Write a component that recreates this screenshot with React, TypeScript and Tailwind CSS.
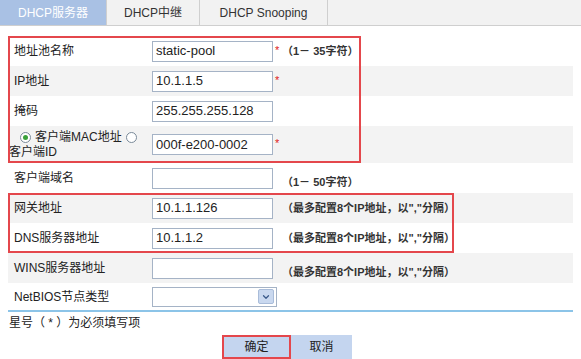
import { ChevronDown } from "lucide-react";

const font = { fontFamily: '"Liberation Sans", "Noto Sans CJK SC", sans-serif' };

type Row = {
  label: React.ReactNode;
  value?: string;
  required?: boolean;
  hint?: string;
  gray?: boolean;
  h: string;
  select?: boolean;
};

const rows: Row[] = [
  { label: "地址池名称", value: "static-pool", required: true, hint: "（1－ 35字符）", h: "h-[30px]" },
  { label: "IP地址", value: "10.1.1.5", required: true, gray: true, h: "h-[30px]" },
  { label: "掩码", value: "255.255.255.128", h: "h-[30px]" },
  {
    label: (
      <div className="leading-[15px] -ml-[5px]">
        <div className="flex items-center gap-[4px] pl-[11px]">
          <span className="w-[11px] h-[11px] rounded-full border border-[#7a8a99] bg-white flex items-center justify-center">
            <span className="w-[5px] h-[5px] rounded-full bg-[#3aa13a]" />
          </span>
          <span>客户端MAC地址</span>
          <span className="w-[11px] h-[11px] rounded-full border border-[#7a8a99] bg-white" />
        </div>
        <div>客户端ID</div>
      </div>
    ),
    value: "000f-e200-0002",
    required: true,
    gray: true,
    h: "h-[37px]",
  },
  { label: "客户端域名", value: "", hint: "（1－ 50字符）", h: "h-[30px]" },
  { label: "网关地址", value: "10.1.1.126", hint: "（最多配置8个IP地址，以\",\"分隔）", gray: true, h: "h-[30px]" },
  { label: "DNS服务器地址", value: "10.1.1.2", hint: "（最多配置8个IP地址，以\",\"分隔）", h: "h-[30px]" },
  { label: "WINS服务器地址", value: "", hint: "（最多配置8个IP地址，以\",\"分隔）", gray: true, h: "h-[30px]" },
  { label: "NetBIOS节点类型", select: true, h: "h-[27px]" },
];

export default function App() {
  return (
    <div className="w-[581px] h-[359px] bg-white text-[12px] text-[#222] overflow-hidden" style={font}>
      {/* Tabs */}
      <div className="flex h-[26px] border-b border-[#cfcfcf] bg-[#f2f2f2]">
        <div className="w-[106px] flex items-center justify-center bg-[#a9c1e4] text-white text-[12px]">DHCP服务器</div>
        <div className="w-[94px] flex items-center justify-center border-x border-[#cfcfcf] text-[#333]">DHCP中继</div>
        <div className="w-[128px] flex items-center justify-center border-r border-[#cfcfcf] text-[#333]">DHCP Snooping</div>
        <div className="flex-1" />
      </div>

      <div className="relative mt-[10px] mx-[8px] w-[565px]">
        {rows.map((r, i) => (
          <div key={i} className={`flex items-center ${r.h} ${r.gray ? "bg-[#f3f3f3]" : ""}`}>
            <div className="w-[144px] pl-[6px] shrink-0">{r.label}</div>
            {r.select ? (
              <div className="w-[125px] h-[20px] border border-[#a5b3c6] bg-white flex justify-end items-center pr-[2px]">
                <div className="w-[16px] h-[15px] bg-[#c9d8ef] border border-[#a9bcd9] rounded-[2px] flex items-center justify-center">
                  <ChevronDown size={10} strokeWidth={3} className="text-[#3b5a8a]" />
                </div>
              </div>
            ) : (
              <div className="w-[121px] h-[21px] border border-[#a5b3c6] bg-white flex items-center px-[3px] text-[13px] text-[#222]">
                {r.value}
              </div>
            )}
            {!r.select && (
              <div className="flex items-center ml-[2px] w-[7px]">
                {r.required && <span className="text-[#e02020] text-[11px] -mt-[2px]">*</span>}
              </div>
            )}
            {r.hint && (
              <span className={`text-[11px] font-semibold text-[#333] ${r.value === "" ? "mt-[8px]" : ""}`}>{r.hint}</span>
            )}
          </div>
        ))}

        {/* annotation boxes */}
        <div className="absolute left-0 top-0 w-[353px] h-[127px] border-2 border-[#e4474c] pointer-events-none" />
        <div className="absolute left-0 top-[157px] w-[446px] h-[60px] border-2 border-[#e4474c] pointer-events-none" />

        <div className="h-[2px] bg-[#8cc4e8]" />
        <div className="mt-[3px] pl-[1px] text-[12px] leading-[16px]">星号（ * ）为必须填写项</div>
      </div>

      <div className="flex justify-center mt-[4px] ml-[-7px]">
        <button className="w-[69px] h-[24px] bg-[#c4d5ef] text-[12px] text-[#222] border-2 border-[#e4474c]">确定</button>
        <button className="w-[61px] h-[24px] bg-[#c4d5ef] text-[12px] text-[#222]">取消</button>
      </div>
    </div>
  );
}
